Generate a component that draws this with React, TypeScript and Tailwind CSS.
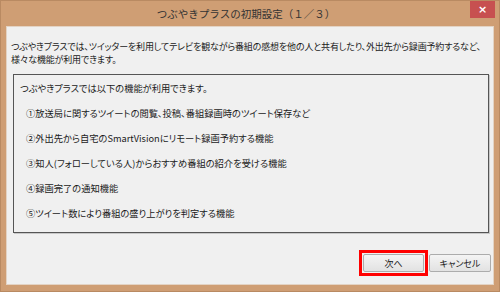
const FEATURES = [
  '①放送局に関するツイートの閲覧、投稿、番組録画時のツイート保存など',
  '②外出先から自宅のSmartVisionにリモート録画予約する機能',
  '③知人(フォローしている人)からおすすめ番組の紹介を受ける機能',
  '④録画完了の通知機能',
  '⑤ツイート数により番組の盛り上がりを判定する機能',
]

export default function App() {
  return (
    <div className="w-[500px] h-[292px] flex flex-col bg-[#cf9e74] border border-[#b98a62] text-[#1a1a1a] font-['Noto_Sans_CJK_JP',sans-serif] [font-feature-settings:'palt']">
      {/* タイトルバー */}
      <div className="relative h-[25px] shrink-0 flex items-center justify-center pt-[1px] pr-[8px]">
        <span className="text-[10.5px] text-[#333] [font-feature-settings:normal]">
          つぶやきプラスの初期設定（１／３）
        </span>
        <div className="absolute right-[4px] top-0 w-[25px] h-[17px] bg-[#c75050] flex items-center justify-center">
          <span className="text-white text-[11px] leading-none font-bold font-['DejaVu_Sans',sans-serif]">×</span>
        </div>
      </div>

      {/* クライアント領域 */}
      <div className="flex-1 mx-[5px] mb-[6px] bg-[#f0f0f0] border border-[#e3d3c4] flex flex-col">
        <p className="pl-[4px] pt-[13px] text-[9px] leading-[13px] tracking-[-0.15px]">
          つぶやきプラスでは、ツイッターを利用してテレビを観ながら番組の感想を他の人と共有したり、外出先から録画予約するなど、
          <br />
          様々な機能が利用できます。
        </p>

        <div className="mt-[8px] ml-[6px] mr-[4px] h-[159px] border border-[#555] shadow-[1px_1px_0_#c8c8c8] pl-[6px] pt-[1px] text-[9.25px]">
          <div className="h-[25px] leading-[25px]">つぶやきプラスでは以下の機能が利用できます。</div>
          {FEATURES.map((f) => (
            <div key={f} className="h-[25px] leading-[25px] pl-[6px]">{f}</div>
          ))}
        </div>

        <div className="mt-[17px] flex justify-end pr-[2px]">
          <div className="border-[3px] border-[#ff0000] p-px">
            <button className="w-[61px] h-[18px] rounded-[2px] border border-[#acacac] bg-gradient-to-b from-[#f4f4f4] to-[#e2e2e2] text-[9px] leading-none flex items-center justify-center">
              次へ
            </button>
          </div>
          <button className="ml-[1px] mt-[4px] w-[62px] h-[18px] rounded-[2px] border border-[#acacac] bg-gradient-to-b from-[#f4f4f4] to-[#e2e2e2] text-[9px] leading-none flex items-center justify-center">
            キャンセル
          </button>
        </div>
      </div>
    </div>
  )
}
